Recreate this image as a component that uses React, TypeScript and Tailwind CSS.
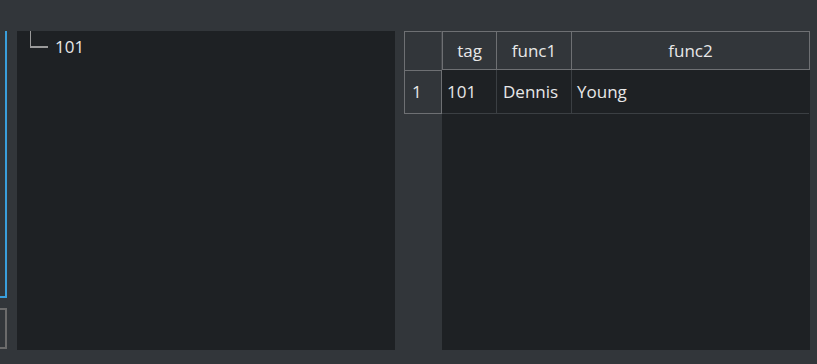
const rows = [{ id: 1, tag: "101", func1: "Dennis", func2: "Young" }];

function TreePanel() {
  return (
    <div className="w-[378px] bg-[#1e2124] relative">
      <div className="flex items-start pl-[13px]">
        <div className="w-[18px] h-[17px] border-l border-b-2 border-[#9a9a9a]" />
        <span className="ml-[7px] mt-[5px] leading-[22px]">101</span>
      </div>
    </div>
  );
}

function DataTable() {
  return (
    <div className="flex w-[406px]">
      {/* row header column */}
      <div className="w-[38px] flex flex-col">
        <div className="h-[39px] border-l border-t border-r border-[#6e7073] border-r-[#45484c]" />
        <div className="h-[44px] border border-[#6e7073] flex items-center pl-[7px]">1</div>
      </div>
      {/* data area */}
      <div className="flex-1 bg-[#1e2124] flex flex-col">
        <div className="flex h-[39px] bg-[#32363a] border-t border-r border-[#6e7073]">
          <div className="w-[54px] border-l border-b border-[#6e7073] flex items-center justify-center">tag</div>
          <div className="w-[75px] border-l border-b border-[#6e7073] flex items-center justify-center">func1</div>
          <div className="flex-1 border-l border-b border-[#6e7073] flex items-center justify-center">func2</div>
        </div>
        {rows.map((r) => (
          <div key={r.id} className="flex h-[44px] border-b border-[#3b3f43] mr-px">
            <div className="w-[54px] flex items-center pl-[5px]">{r.tag}</div>
            <div className="w-[75px] border-l border-[#3b3f43] flex items-center pl-[6px]">{r.func1}</div>
            <div className="flex-1 border-l border-[#3b3f43] flex items-center pl-[5px]">{r.func2}</div>
          </div>
        ))}
      </div>
    </div>
  );
}

export default function App() {
  return (
    <div
      className="w-[817px] h-[364px] bg-[#32363a] text-[#e8e8e8] text-[17px] overflow-hidden pt-[31px] pb-[14px]"
      style={{ fontFamily: '"Segoe UI", "Open Sans", sans-serif' }}
    >
      <div className="flex h-full">
        <div className="w-[7px] flex flex-col">
          <div className="h-[267px] border-r-2 border-b-2 border-[#3a9fdc]" />
          <div className="mt-[10px] h-[41px] border-r-2 border-t-2 border-b-2 border-[#6b6b6b]" />
        </div>
        <div className="ml-[10px] flex">
          <TreePanel />
        </div>
        <div className="ml-[9px] flex">
          <DataTable />
        </div>
      </div>
    </div>
  );
}
